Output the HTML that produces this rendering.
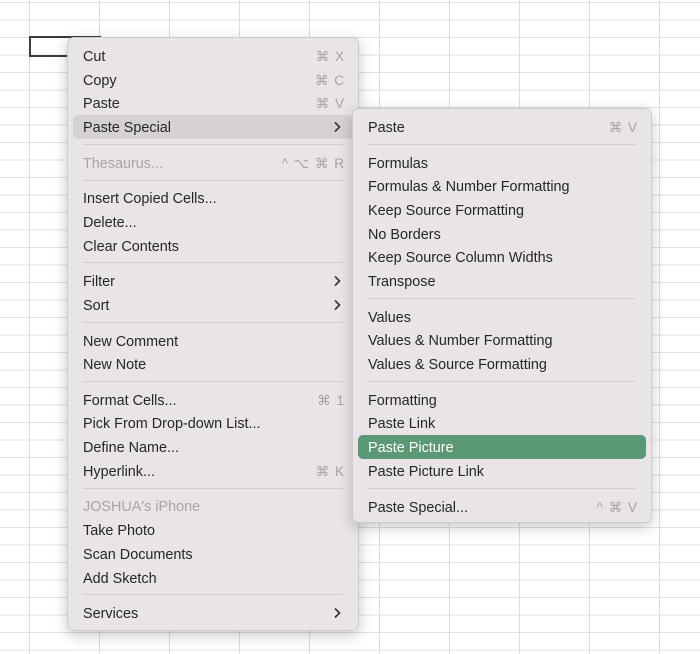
<!DOCTYPE html>
<html><head><style>
body{margin:0;width:700px;height:654px;overflow:hidden;background:#fff;position:relative;font-family:"Liberation Sans",sans-serif;}
.grid{position:absolute;left:0;top:0;width:700px;height:654px;
background-image:linear-gradient(to right,#dcdadc 1px,transparent 1px),linear-gradient(to bottom,#e2e0e2 1px,transparent 1px);
background-size:70px 17.5px;background-position:29px 2px;}
.sel{position:absolute;left:29px;top:36px;width:68px;height:17px;border:2px solid #3c3c3c;}
.menu{position:absolute;background:#e9e4e7;border:1px solid #cfcacd;border-radius:7px;box-shadow:0 4px 14px rgba(0,0,0,.22);}
.it{position:absolute;left:15px;font-size:14.4px;color:#262626;line-height:20px;white-space:nowrap;margin-top:1.5px;}
.dis{color:#a8a4a7;}
.sc{position:absolute;font-size:13.5px;color:#a5a1a4;line-height:20px;text-align:right;white-space:nowrap;letter-spacing:1px;margin-top:1.5px;}
.sep{position:absolute;left:15px;height:1px;background:#d3ced1;}
.hl{position:absolute;border-radius:5px;}
.ar{position:absolute;width:8px;height:12px;}
</style></head><body>
<div class="grid"></div>
<div class="sel"></div>

<div class="menu" style="left:67px;top:37px;width:290px;height:592px;">
<div class="hl" style="left:5px;top:77px;width:280px;height:24px;background:#d6d1d4;"></div>
<div class="it" style="top:7px">Cut</div><div class="sc" style="right:13px;top:7px">⌘ X</div>
<div class="it" style="top:31px">Copy</div><div class="sc" style="right:13px;top:31px">⌘ C</div>
<div class="it" style="top:54px">Paste</div><div class="sc" style="right:13px;top:54px">⌘ V</div>
<div class="it" style="top:78px">Paste Special</div><svg class="ar" style="right:17px;top:83px" viewBox="0 0 8 12"><path d="M2 1.5l4.5 4.5L2 10.5" fill="none" stroke="#333" stroke-width="1.6"/></svg>
<div class="sep" style="top:106px;width:260px"></div>
<div class="it dis" style="top:114px">Thesaurus...</div><div class="sc" style="right:13px;top:114px">^ ⌥ ⌘ R</div>
<div class="sep" style="top:142px;width:260px"></div>
<div class="it" style="top:149px">Insert Copied Cells...</div>
<div class="it" style="top:173px">Delete...</div>
<div class="it" style="top:197px">Clear Contents</div>
<div class="sep" style="top:224px;width:260px"></div>
<div class="it" style="top:232px">Filter</div><svg class="ar" style="right:17px;top:237px" viewBox="0 0 8 12"><path d="M2 1.5l4.5 4.5L2 10.5" fill="none" stroke="#333" stroke-width="1.6"/></svg>
<div class="it" style="top:256px">Sort</div><svg class="ar" style="right:17px;top:261px" viewBox="0 0 8 12"><path d="M2 1.5l4.5 4.5L2 10.5" fill="none" stroke="#333" stroke-width="1.6"/></svg>
<div class="sep" style="top:284px;width:260px"></div>
<div class="it" style="top:292px">New Comment</div>
<div class="it" style="top:315px">New Note</div>
<div class="sep" style="top:343px;width:260px"></div>
<div class="it" style="top:351px">Format Cells...</div><div class="sc" style="right:13px;top:351px">⌘ 1</div>
<div class="it" style="top:374px">Pick From Drop-down List...</div>
<div class="it" style="top:398px">Define Name...</div>
<div class="it" style="top:422px">Hyperlink...</div><div class="sc" style="right:13px;top:422px">⌘ K</div>
<div class="sep" style="top:450px;width:260px"></div>
<div class="it dis" style="top:457px">JOSHUA's iPhone</div>
<div class="it" style="top:481px">Take Photo</div>
<div class="it" style="top:505px">Scan Documents</div>
<div class="it" style="top:529px">Add Sketch</div>
<div class="sep" style="top:556px;width:260px"></div>
<div class="it" style="top:564px">Services</div><svg class="ar" style="right:17px;top:569px" viewBox="0 0 8 12"><path d="M2 1.5l4.5 4.5L2 10.5" fill="none" stroke="#333" stroke-width="1.6"/></svg>
</div>

<div class="menu" style="left:352px;top:108px;width:298px;height:413px;">
<div class="it" style="top:7px">Paste</div><div class="sc" style="right:13px;top:7px">⌘ V</div>
<div class="sep" style="top:35px;width:268px"></div>
<div class="it" style="top:43px">Formulas</div>
<div class="it" style="top:66px">Formulas &amp; Number Formatting</div>
<div class="it" style="top:90px">Keep Source Formatting</div>
<div class="it" style="top:114px">No Borders</div>
<div class="it" style="top:137px">Keep Source Column Widths</div>
<div class="it" style="top:161px">Transpose</div>
<div class="sep" style="top:189px;width:268px"></div>
<div class="it" style="top:197px">Values</div>
<div class="it" style="top:220px">Values &amp; Number Formatting</div>
<div class="it" style="top:244px">Values &amp; Source Formatting</div>
<div class="sep" style="top:272px;width:268px"></div>
<div class="it" style="top:280px">Formatting</div>
<div class="it" style="top:303px">Paste Link</div>
<div class="hl" style="left:5px;top:326px;width:288px;height:24px;background:#5a9876;"></div>
<div class="it" style="top:327px;color:#fff">Paste Picture</div>
<div class="it" style="top:351px">Paste Picture Link</div>
<div class="sep" style="top:379px;width:268px"></div>
<div class="it" style="top:387px">Paste Special...</div><div class="sc" style="right:13px;top:387px">^ ⌘ V</div>
</div>
</body></html>
